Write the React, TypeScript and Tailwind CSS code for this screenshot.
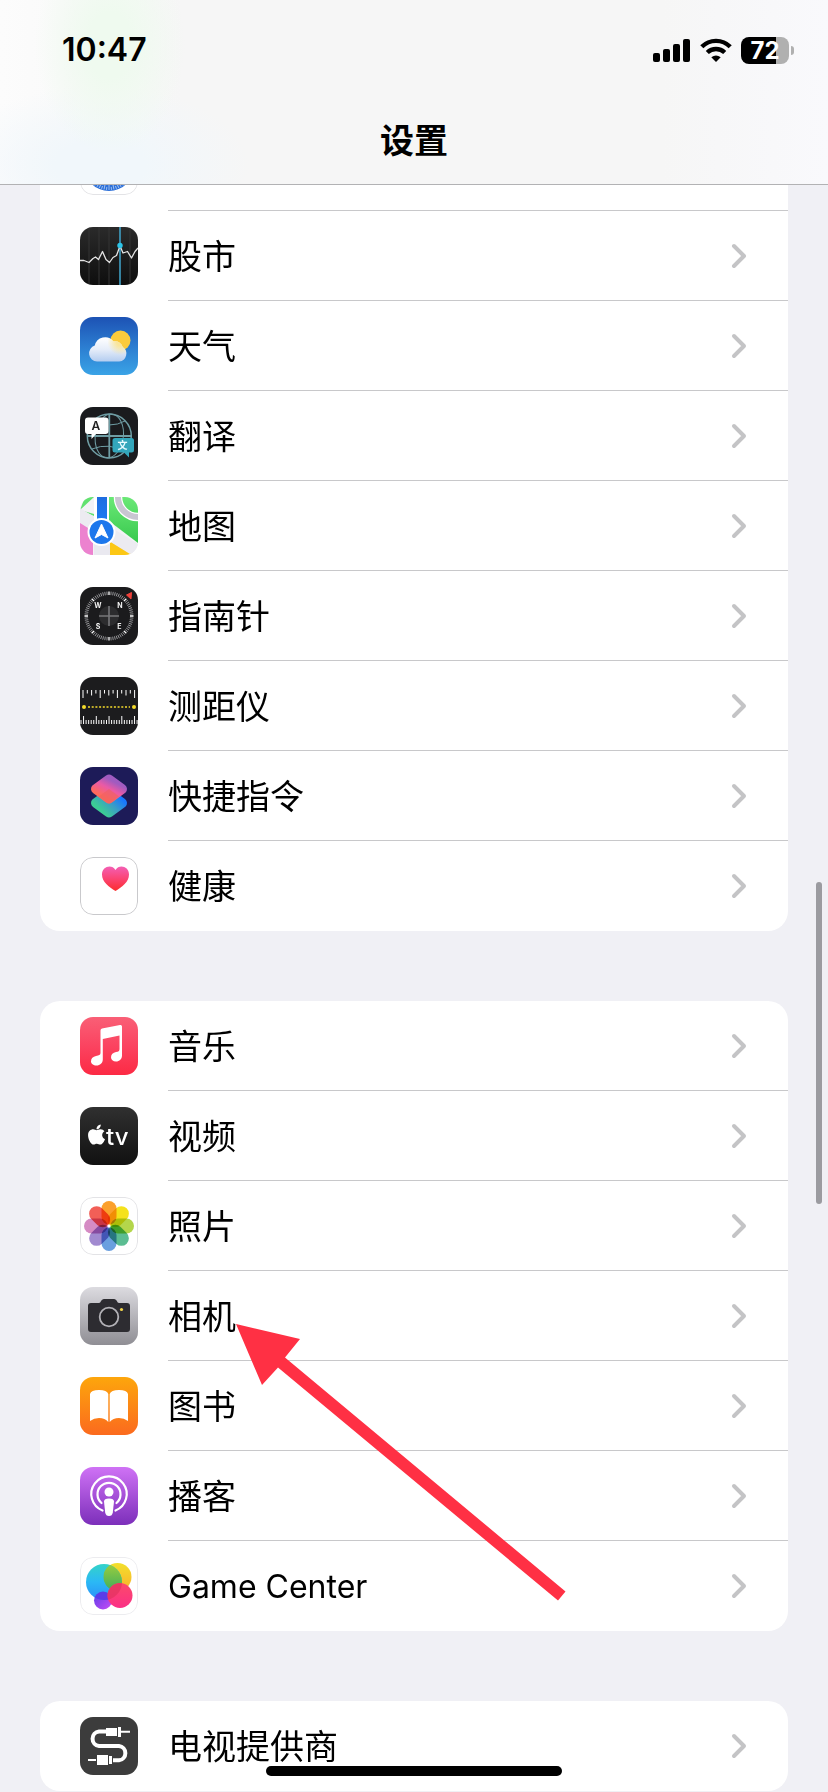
import * as React from 'react';
import { FaApple } from 'react-icons/fa';

const FONT = "font-['Inter','Noto_Sans_CJK_SC',sans-serif]";

function Tile({ children, border }: { children: React.ReactNode; border?: string }) {
    return (
        <svg viewBox="0 0 58 58" className="w-[58px] h-[58px] shrink-0 rounded-[13px] overflow-hidden" aria-hidden="true">
            {children}
            {border && <rect x="0.5" y="0.5" width="57" height="57" rx="12.5" fill="none" stroke={border} />}
        </svg>
    );
}

function Gradient({ id, stops, diagonal }: { id: string; stops: string[]; diagonal?: boolean }) {
    return (
        <linearGradient id={id} x1="0" y1="0" x2={diagonal ? '1' : '0'} y2="1">
            {stops.map((color, i) => (
                <stop key={i} offset={i / (stops.length - 1)} stopColor={color} />
            ))}
        </linearGradient>
    );
}

function SafariIcon() {
    return (
        <Tile border="#e3e3e6">
            <rect width="58" height="58" fill="#fff" />
            <circle cx="29" cy="29" r="25" fill="#2b6fd9" />
            {Array.from({ length: 60 }, (_, i) => (
                <line key={i} x1="29" y1={i % 2 ? 50 : 48} x2="29" y2="53" stroke="#c9def8" strokeWidth="0.7" transform={`rotate(${i * 6} 29 29)`} />
            ))}
        </Tile>
    );
}

function StocksIcon() {
    return (
        <Tile>
            <defs><Gradient id="stocks" stops={['#2a2a2a', '#0e0e0e']} /></defs>
            <rect width="58" height="58" fill="url(#stocks)" />
            {[9, 19, 29, 50].map(x => (
                <line key={x} x1={x} y1="0" x2={x} y2="58" stroke="#343434" />
            ))}
            <line x1="40" y1="0" x2="40" y2="58" stroke="#3f9fc4" strokeWidth="1.6" />
            <polyline
                points="0,33.5 4,33.5 9,35.5 13,31.5 15.5,30 18.5,32.5 22.5,24.5 26,32.5 29.5,35.5 33,30.5 36.5,28.5 40,19 43,26 47.5,24.5 51.5,31 55,24.5 58,21"
                fill="none" stroke="#e4e4e4" strokeWidth="1.3" strokeLinejoin="round"
            />
            <circle cx="40" cy="18.5" r="2.7" fill="#2cc4e8" />
        </Tile>
    );
}

const CLOUD = 'M17 44.5a8.2 8.2 0 0 1 -2.2 -16a10.5 10.5 0 0 1 18.6 -4.2a9 9 0 0 1 9.4 5.600a8 8 0 0 1 -3.600 14.600z';

function WeatherIcon() {
    return (
        <Tile>
            <defs>
                <Gradient id="sky" stops={['#1d52b4', '#2b7cd0', '#3aa3e6']} />
                <Gradient id="cloud" stops={['#ffffff', '#e6edf9', '#b4cdf0']} />
                <radialGradient id="glow" gradientUnits="userSpaceOnUse" cx="40.5" cy="25" r="13">
                    <stop offset="0.3" stopColor="#fbe38a" stopOpacity="0.85" />
                    <stop offset="1" stopColor="#fbe38a" stopOpacity="0" />
                </radialGradient>
            </defs>
            <rect width="58" height="58" fill="url(#sky)" />
            <circle cx="40.5" cy="23.5" r="10" fill="#fbcb3c" />
            <path d={CLOUD} fill="url(#cloud)" />
            <path d={CLOUD} fill="url(#glow)" />
        </Tile>
    );
}

function TranslateIcon() {
    return (
        <Tile>
            <rect width="58" height="58" fill="#1a1b1e" />
            <g fill="none" stroke="#6f9da4" strokeWidth="1.5">
                <circle cx="29.3" cy="29" r="22" />
                <ellipse cx="29.3" cy="29" rx="14" ry="22" transform="rotate(8 29.3 29)" strokeWidth="1" />
                <path d="M29.3 7v44M7 29h45" strokeWidth="1.8" />
                <path d="M12 42q17 -7 34 3M29 18q9 0 16 -4" strokeWidth="1" />
            </g>
            <path d="M8 10.5h17.5a3 3 0 0 1 3 3v10.5a3 3 0 0 1 -3 3h-9.500l-4.500 5v-5h-3.500a3 3 0 0 1 -3 -3v-10.500a3 3 0 0 1 3 -3z" fill="#fff" />
            <text x="15.8" y="23" textAnchor="middle" fontSize="12" fontWeight="600" fill="#222">A</text>
            <path d="M35 31h16.5a2.5 2.5 0 0 1 2.5 2.5v9.5a2.5 2.5 0 0 1 -2.5 2.5h-2.500v5l-5 -5h-9a2.5 2.5 0 0 1 -2.5 -2.5v-9.500a2.5 2.5 0 0 1 2.5 -2.5z" fill="#33a6bb" />
            <text x="42.5" y="42" textAnchor="middle" fontSize="10" fontWeight="700" fill="#e8fbff">文</text>
        </Tile>
    );
}

function MapsIcon() {
    return (
        <Tile>
            <defs>
                <Gradient id="route" stops={['#1f6de0', '#1d7df5']} />
                <Gradient id="park" stops={['#6ae876', '#38c94e']} />
            </defs>
            <rect width="58" height="58" fill="#f3f2f6" />
            <path d="M0 13L14 0V17z M0 13L14 19V0H5z" fill="#62e270" />
            <path d="M29 0H58V46L29 24z" fill="url(#park)" />
            <path d="M0 24L13 32V58H0z" fill="#ec82cf" />
            <path d="M30 44L53 58H30z" fill="#fcc714" />
            <circle cx="58" cy="0" r="20" fill="none" stroke="#fff" strokeWidth="8.5" />
            <circle cx="58" cy="0" r="20" fill="none" stroke="#c9c6d2" strokeWidth="6" />
            <path d="M0 11L58 47V62L0 26z" fill="#ecebf1" />
            <path d="M14 0H29V58H14z" fill="#fff" />
            <path d="M14 30H30V58H14z" fill="#eae9f0" />
            <path d="M17 0H27V28H17z" fill="url(#route)" />
            <circle cx="21.5" cy="35" r="14" fill="#fff" />
            <circle cx="21.5" cy="35" r="12" fill="#1d77ec" />
            <path d="M21.5 27L28 41L21.5 37.5L15 41z" fill="#fff" stroke="#fff" strokeLinejoin="round" />
        </Tile>
    );
}

function CompassIcon() {
    return (
        <Tile>
            <rect width="58" height="58" fill="#1b1b1d" />
            <circle cx="29" cy="29" r="10" fill="#2c2c2e" />
            <path d="M29 19V39M19 29H39" stroke="#77777a" strokeWidth="1.6" />
            {Array.from({ length: 72 }, (_, i) => (
                <line
                    key={i} x1="29" y1="4.5" x2="29" y2="8"
                    stroke={i % 9 === 0 ? '#fff' : '#a5a5a8'}
                    strokeWidth={i % 9 === 0 ? 1.3 : 0.8}
                    transform={`rotate(${i * 5} 29 29)`}
                />
            ))}
            <path d="M51.5 5.5L46.5 8L51 12z" fill="#f0413a" stroke="#f0413a" />
            <g fontSize="7" fontWeight="700" fill="#f2f2f2" textAnchor="middle">
                <text x="18" y="21">W</text>
                <text x="40" y="21">N</text>
                <text x="18" y="42">S</text>
                <text x="39.5" y="42">E</text>
            </g>
        </Tile>
    );
}

function MeasureIcon() {
    return (
        <Tile>
            <rect width="58" height="58" fill="#1c1c1e" />
            {Array.from({ length: 13 }, (_, i) => (
                <line key={i} x1={3 + i * 4.3} y1="13" x2={3 + i * 4.3} y2={i % 4 === 0 ? 21 : i % 2 ? 16.5 : 18.5} stroke="#fff" strokeWidth="1" />
            ))}
            {Array.from({ length: 23 }, (_, i) => (
                <line key={i} x1={1 + i * 2.55} y1={i % 5 === 1 ? 39 : 43} x2={1 + i * 2.55} y2="47" stroke="#fff" strokeWidth="1" />
            ))}
            <path d="M8 30H50" stroke="#f5dc2c" strokeWidth="1.6" strokeDasharray="2 1.7" />
            <circle cx="4" cy="30" r="2" fill="#f5dc2c" />
            <circle cx="54" cy="30" r="2" fill="#f5dc2c" />
        </Tile>
    );
}

function ShortcutsIcon() {
    return (
        <Tile>
            <defs>
                <linearGradient id="lower" x1="1" y1="0.3" x2="0.2" y2="0.9">
                    <stop offset="0" stopColor="#1878ff" />
                    <stop offset="0.5" stopColor="#3a9fc4" />
                    <stop offset="1" stopColor="#3ccb95" />
                </linearGradient>
                <linearGradient id="upper" x1="0.3" y1="0.9" x2="0.8" y2="0.2">
                    <stop offset="0" stopColor="#ff6a5c" />
                    <stop offset="0.550" stopColor="#ea5aa6" />
                    <stop offset="1" stopColor="#a05bc0" />
                </linearGradient>
            </defs>
            <rect width="58" height="58" fill="#1d1b58" />
            <path d="M29 26.500L42 36L29 45.500L16 36z" fill="url(#lower)" stroke="url(#lower)" strokeWidth="10" strokeLinejoin="round" />
            <path d="M29 12.500L42 22L29 31.500L16 22z" fill="url(#upper)" stroke="url(#upper)" strokeWidth="10" strokeLinejoin="round" />
            <path d="M29 22L39 29.500L31 36Q29 37 27 36L19 29.500z" fill="#f0605f" opacity="0.6" />
        </Tile>
    );
}

function HealthIcon() {
    return (
        <Tile border="#c9c9cc">
            <defs><Gradient id="heart" stops={['#f35fb4', '#fb4473', '#fb2c2c']} /></defs>
            <rect width="58" height="58" fill="#fff" />
            <path d="M35.5 34C29 30 22 25 22 17.5C22 9 32 7 35.5 13C39 7 49 9 49 17.5C49 25 42 30 35.5 34z" fill="url(#heart)" />
        </Tile>
    );
}

function MusicIcon() {
    return (
        <Tile>
            <defs><Gradient id="music" stops={['#f95f76', '#fb4360', '#fc2a44']} /></defs>
            <rect width="58" height="58" fill="url(#music)" />
            <path
                d="M20.5 13.5Q20.5 12 22 11.6L40 8Q42 7.6 42 9.5V38.5C42 42 39.5 44.5 36 44.5C33 44.5 31 42.8 31 40.3C31 37.5 33 35.7 36 35.1C38.5 34.6 39.5 34.2 39.5 32V18.5L22.8 22V42.5C22.8 46 20 48.5 16.5 48.5C13.3 48.5 11 46.7 11 44.2C11 41.4 13 39.6 16 39C19 38.4 20.5 38 20.5 36z"
                fill="#fff"
            />
        </Tile>
    );
}

function TvIcon() {
    return (
        <Tile>
            <defs><Gradient id="tv" stops={['#303030', '#111111']} /></defs>
            <rect width="58" height="58" fill="url(#tv)" />
            <FaApple x="5" y="16" size={23} color="#fff" />
            <text x="26" y="38" fontSize="24" fontWeight="500" fill="#fff">tv</text>
        </Tile>
    );
}

const PETALS = ['#fba02c', '#f5e21c', '#b4d64b', '#5bbd92', '#6a9fdf', '#a18ad0', '#d58bc4', '#f25f57'];

function PhotosIcon() {
    return (
        <Tile border="#e3e3e6">
            <rect width="58" height="58" fill="#fff" />
            {PETALS.map((color, i) => (
                <rect
                    key={color} x="21.5" y="4" width="15" height="23.5" rx="7.5" fill={color}
                    className="mix-blend-multiply" transform={`rotate(${i * 45} 29 29)`}
                />
            ))}
        </Tile>
    );
}

function CameraIcon() {
    return (
        <Tile>
            <defs><Gradient id="camera" stops={['#dcdbe0', '#8f8e94']} /></defs>
            <rect width="58" height="58" fill="url(#camera)" />
            <path d="M11 16H19C21 16 21 12 24 12H34C37 12 37 16 39 16H47Q50 16 50 19V42Q50 45 47 45H11Q8 45 8 42V19Q8 16 11 16z" fill="#2d2c31" />
            <circle cx="29" cy="30" r="9.3" fill="#252428" stroke="#b2b1b6" strokeWidth="1.8" />
            <circle cx="41.5" cy="22.5" r="1.6" fill="#f3d64c" />
        </Tile>
    );
}

function BooksIcon() {
    return (
        <Tile>
            <defs><Gradient id="books" stops={['#fda60c', '#fb6a1e']} /></defs>
            <rect width="58" height="58" fill="url(#books)" />
            <path d="M10 17Q11 13 19 13Q27 13 28.3 17V45Q25 41 19 41Q14 41 10 44z" fill="#fff" />
            <path d="M48 17Q47 13 39 13Q31 13 29.7 17V45Q33 41 39 41Q44 41 48 44z" fill="#fff" />
        </Tile>
    );
}

function PodcastsIcon() {
    return (
        <Tile>
            <defs><Gradient id="podcasts" stops={['#cf72f5', '#7c2fba']} /></defs>
            <rect width="58" height="58" fill="url(#podcasts)" />
            <g fill="none" stroke="#fff" strokeLinecap="round" strokeWidth="2.2">
                <path d="M22.5 43.5A17.7 17.7 0 1 1 35.5 43.5" />
                <path d="M21.5 36A11.5 11.5 0 1 1 36.5 36" />
            </g>
            <circle cx="29" cy="25" r="4.5" fill="#fff" />
            <path d="M24 34.5Q24 31.5 29 31.5Q34 31.5 34 34.5L32.8 45.5Q32.2 49 29 49Q25.8 49 25.2 45.5z" fill="#fff" />
        </Tile>
    );
}

function GameCenterIcon() {
    return (
        <Tile border="#ececef">
            <defs>
                <Gradient id="gc-blue" stops={['#33d3c8', '#2bb8f5', '#2a90f8']} />
                <Gradient id="gc-yellow" stops={['#f2e02c', '#fbb02c']} />
                <Gradient id="gc-green" stops={['#9fce3c', '#3fae5c']} />
                <Gradient id="gc-pink" stops={['#fb4a6a', '#fb2f86']} />
                <Gradient id="gc-purple" stops={['#5a3ce8', '#c94cf5']} diagonal />
                <clipPath id="gc-clip"><circle cx="24" cy="25" r="18" /></clipPath>
                <clipPath id="gc-clip2"><circle cx="40" cy="38.5" r="12.5" /></clipPath>
            </defs>
            <rect width="58" height="58" fill="#fff" />
            <circle cx="23" cy="43.5" r="9" fill="url(#gc-purple)" />
            <circle cx="37.5" cy="20" r="14" fill="url(#gc-yellow)" />
            <circle cx="24" cy="25" r="18" fill="url(#gc-blue)" />
            <circle cx="37.5" cy="20" r="14" fill="url(#gc-green)" clipPath="url(#gc-clip)" />
            <circle cx="23" cy="43.5" r="9" fill="#5a3ce8" clipPath="url(#gc-clip)" />
            <circle cx="40" cy="38.5" r="12.5" fill="url(#gc-pink)" />
            <circle cx="24" cy="25" r="18" fill="#e0305c" opacity="0.6" clipPath="url(#gc-clip2)" />
        </Tile>
    );
}

function TvProviderIcon() {
    return (
        <Tile>
            <rect width="58" height="58" fill="#3c3c3c" />
            <path d="M26 14.5H19A7.300 7.300 0 0 0 19 29H39A7.200 7.200 0 0 1 39 43.300H33" fill="none" stroke="#fff" strokeWidth="4" />
            <path d="M26 11H37V19H26zM38 10H41V20H38zM41 13.7H50V15.7H41z" fill="#fff" />
            <path d="M17 38H28V48H17zM29 39H32V47H29zM8 42H16V44H8z" fill="#fff" />
        </Tile>
    );
}

interface Item {
    name: string;
    icon: React.ReactNode;
    latin?: boolean;
}

const groups: Item[][] = [
    [
        { name: 'Safari浏览器', icon: <SafariIcon /> },
        { name: '股市', icon: <StocksIcon /> },
        { name: '天气', icon: <WeatherIcon /> },
        { name: '翻译', icon: <TranslateIcon /> },
        { name: '地图', icon: <MapsIcon /> },
        { name: '指南针', icon: <CompassIcon /> },
        { name: '测距仪', icon: <MeasureIcon /> },
        { name: '快捷指令', icon: <ShortcutsIcon /> },
        { name: '健康', icon: <HealthIcon /> },
    ],
    [
        { name: '音乐', icon: <MusicIcon /> },
        { name: '视频', icon: <TvIcon /> },
        { name: '照片', icon: <PhotosIcon /> },
        { name: '相机', icon: <CameraIcon /> },
        { name: '图书', icon: <BooksIcon /> },
        { name: '播客', icon: <PodcastsIcon /> },
        { name: 'Game Center', icon: <GameCenterIcon />, latin: true },
    ],
    [{ name: '电视提供商', icon: <TvProviderIcon /> }],
];

function Row({ item, last }: { item: Item; last: boolean }) {
    return (
        <li>
            <a href="#" className="flex items-center h-[90px] pl-10 gap-[30px]">
                {item.icon}
                <span className={`flex flex-1 h-full items-center justify-between pr-10 border-b ${last ? 'border-transparent' : 'border-[#c8c8ca]'}`}>
                    <span className={`pt-[3px] leading-[48px] ${item.latin ? 'text-[32px]' : 'text-[34px]'}`}>{item.name}</span>
                    <svg viewBox="0 0 18 26" className="w-[18px] h-[26px]" fill="none" stroke="#c4c4c6" strokeWidth="4" strokeLinecap="round" strokeLinejoin="round" aria-hidden="true">
                        <path d="M4 3L14 13L4 23" />
                    </svg>
                </span>
            </a>
        </li>
    );
}

function StatusBar() {
    return (
        <div className="flex items-center justify-between h-[100px] pl-[62px] pr-[34px]">
            <span className="text-[32px] leading-[40px] font-semibold">10:47</span>
            <div className="flex items-center gap-[9px]">
                <svg viewBox="0 0 38 24" className="w-[38px] h-6" aria-label="signal">
                    <rect x="0" y="15" width="7" height="9" rx="2" />
                    <rect x="10" y="11" width="7" height="13" rx="2" />
                    <rect x="20" y="6" width="7" height="18" rx="2" />
                    <rect x="30" y="1" width="7" height="23" rx="2" />
                </svg>
                <svg viewBox="0 0 32 24" className="w-8 h-6" fill="none" stroke="#000" strokeWidth="4.4" aria-label="wifi">
                    <path d="M1.8 8.8A20 20 0 0 1 30.2 8.8" />
                    <path d="M7.3 14.5A12.5 12.5 0 0 1 24.7 14.5" />
                    <path d="M16 24L11.3 19.3Q16 15.5 20.7 19.3z" fill="#000" stroke="none" />
                </svg>
                <div className="flex items-center gap-[2px]">
                    <span className="flex w-12 h-[27px] items-center justify-center rounded-[8px] bg-[linear-gradient(to_right,#000_72%,#b0b0b0_72%)] text-[24px] leading-[27px] font-bold text-white">
                        72
                    </span>
                    <span className="w-[3px] h-[9px] rounded-r-full bg-[#b0b0b0]" />
                </div>
            </div>
        </div>
    );
}

export default function App() {
    return (
        <div className={`relative min-h-screen overflow-hidden bg-[#f0f0f5] text-black ${FONT}`}>
            <header className="sticky top-0 z-10 h-[185px] border-b border-[#b2b2b4] bg-[#f6f6f6] bg-[radial-gradient(ellipse_75px_110px_at_110px_45px,#effaef_30%,transparent),radial-gradient(ellipse_150px_80px_at_100px_165px,#f1f7fb_30%,transparent),linear-gradient(to_right,#fcfcfc,#f6f6f6_22%,#f6f6f6_80%,#f9f9fc)]">
                <StatusBar />
                <h1 className="flex items-center justify-center h-[82px] text-[34px] leading-[48px] font-semibold">设置</h1>
            </header>

            {/* first group is scrolled partly under the header */}
            <main className="flex flex-col gap-[70px] px-10 -mt-16">
                {groups.map((items, i) => (
                    <ul key={i} className="rounded-[20px] bg-white">
                        {items.map((item, j) => (
                            <Row key={item.name} item={item} last={j === items.length - 1} />
                        ))}
                    </ul>
                ))}
            </main>

            <svg viewBox="0 0 330 277" className="absolute left-[236px] top-[1324px] w-[330px] h-[277px] pointer-events-none" aria-hidden="true">
                <path d="M0 0L64 15L49 33.5L329.5 267.5L322 276.5L42 43.5L26 61z" fill="#ff3044" />
            </svg>

            <div className="absolute right-[6px] top-[882px] w-[6px] h-[322px] rounded-full bg-[#9b9ba0]" />
            <div className="absolute inset-x-0 bottom-4 flex justify-center">
                <div className="w-[296px] h-[10px] rounded-full bg-black" />
            </div>
        </div>
    );
}
